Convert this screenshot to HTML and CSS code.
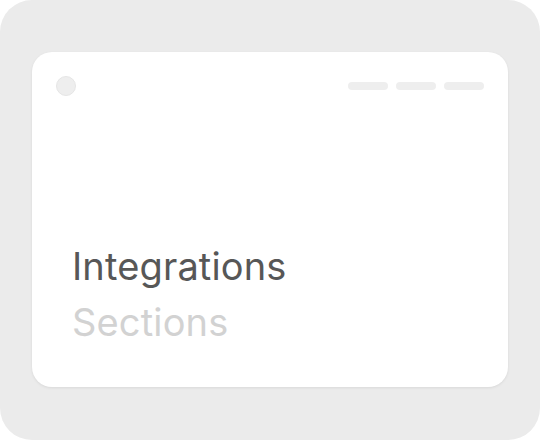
FILE: index.html
```html
<!DOCTYPE html>
<html>
<head>
<meta charset="utf-8">
<link rel="stylesheet" href="styles.css">
</head>
<body>
<div class="frame">
  <div class="card">
    <div class="header">
      <span class="dot"></span>
      <div class="pills">
        <span class="pill"></span>
        <span class="pill"></span>
        <span class="pill"></span>
      </div>
    </div>
    <div class="titles">
      <div class="title">Integrations</div>
      <div class="subtitle">Sections</div>
    </div>
  </div>
</div>
</body>
</html>
```
FILE: styles.css
```css
html, body {
  margin: 0;
  padding: 0;
  background: #ffffff;
}
.frame {
  width: 540px;
  height: 440px;
  box-sizing: border-box;
  background: #ebebeb;
  border-radius: 32px;
  padding: 52px 32px 53px 32px;
  font-family: Inter, "Noto Sans", sans-serif;
}
.card {
  height: 100%;
  background: #ffffff;
  border-radius: 20px;
  box-shadow: 0 1px 3px rgba(0,0,0,0.08);
  padding: 24px;
  box-sizing: border-box;
  display: flex;
  flex-direction: column;
  justify-content: space-between;
}
.header {
  display: flex;
  align-items: center;
  justify-content: space-between;
  height: 20px;
}
.dot {
  width: 20px;
  height: 20px;
  border-radius: 50%;
  background: #eeeeee;
  box-sizing: border-box;
  border: 1px solid #e6e6e6;
}
.pills {
  display: flex;
  gap: 8px;
}
.pill {
  width: 40px;
  height: 8px;
  border-radius: 4px;
  background: #eeeeee;
}
.titles {
  padding: 0 0 13px 16px;
}
.title {
  font-size: 38px;
  line-height: 56px;
  color: #575757;
  letter-spacing: 0.15px;
}
.subtitle {
  font-size: 38px;
  line-height: 56px;
  color: #d2d2d2;
  letter-spacing: 0.15px;
}
```
